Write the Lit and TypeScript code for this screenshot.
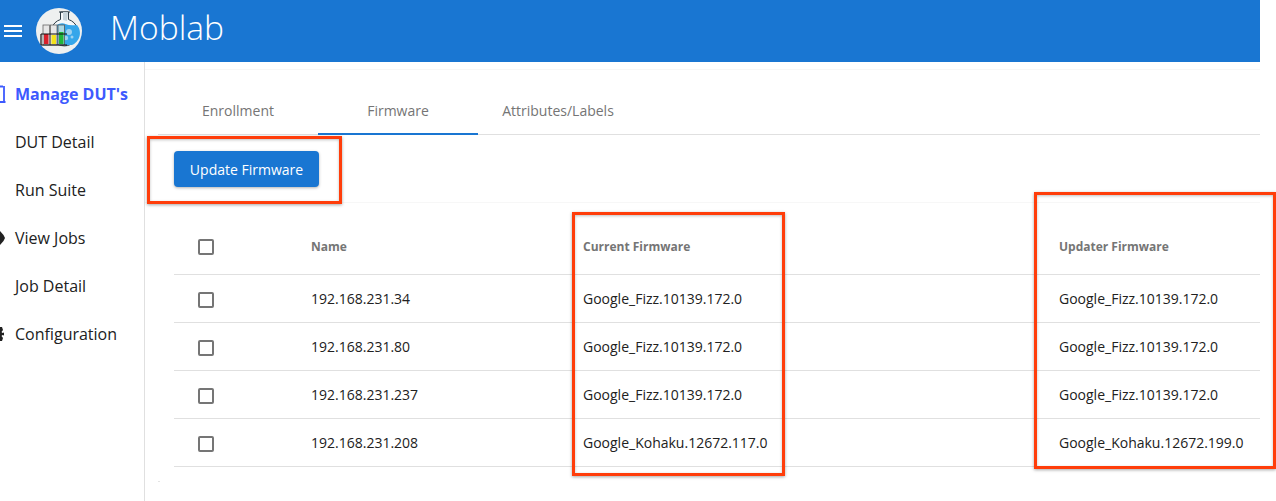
import { LitElement, html, css, svg } from "lit";
import { customElement } from "lit/decorators.js";

const rows = [
  ["192.168.231.34", "Google_Fizz.10139.172.0", "Google_Fizz.10139.172.0"],
  ["192.168.231.80", "Google_Fizz.10139.172.0", "Google_Fizz.10139.172.0"],
  ["192.168.231.237", "Google_Fizz.10139.172.0", "Google_Fizz.10139.172.0"],
  ["192.168.231.208", "Google_Kohaku.12672.117.0", "Google_Kohaku.12672.199.0"],
];

const logo = html`<svg class="logo" viewBox="0 0 46 46" width="46" height="46">
  <circle cx="23" cy="23" r="23" fill="#eef0f0"/>
  <path d="M23 4h11M24.5 4v7.5a13.5 13.5 0 1 0 8 0V4z" fill="#f4f8fa" stroke="#2a3a44" stroke-width="1"/>
  <path d="M27 4l5 0-1 9-4-1z" fill="#c5d3da"/>
  <path d="M20.5 17q5-3 9-1t11.500 1a12.800 12.800 0 0 1-5 20h-15z" fill="#35a6ea"/>
  <circle cx="33" cy="24" r="3" fill="#9ed2f0"/><circle cx="30" cy="30" r="2.200" fill="#9ed2f0"/><circle cx="36" cy="29" r="1.500" fill="#9ed2f0"/>
  <rect x="7" y="17" width="6.500" height="20" fill="#e6e6e6" stroke="#666" stroke-width="0.800"/>
  <rect x="14.500" y="17" width="6.500" height="20" fill="#e6e6e6" stroke="#666" stroke-width="0.800"/>
  <rect x="22" y="17" width="6.500" height="20" fill="#aad8e4" stroke="#555" stroke-width="0.800"/>
  <rect x="8" y="26" width="4.500" height="10" fill="#d8202a"/>
  <rect x="15.500" y="27" width="4.500" height="9" fill="#f3e21a"/>
  <rect x="23" y="24" width="4.500" height="12" fill="#21b63a"/>
  <path d="M5 26h26M5 37h26M5 26v11" fill="none" stroke="#111" stroke-width="1.200"/>
</svg>`;

const icons = {
  dut: svg`<path d="M0 4.500h3M4 4v16M0 20h5.500" fill="none" stroke="currentColor" stroke-width="1.800"/>`,
  jobs: svg`<path d="M0 5l3.500 4 1.500 3-1.500 3-3.500 4z" fill="currentColor"/>`,
  gear: svg`<path d="M0 5h2l1 3-1.500 2 1 1 1.500-.5v3l-1.500-.5-1 1 1.500 2-1 3H0z" fill="currentColor"/>`,
};

function clipped(name?: keyof typeof icons) {
  if (!name) return "";
  return html`<svg class="edge" width="6" height="24" viewBox="0 0 6 24">${icons[name]}</svg>`;
}

@customElement("app-root")
export class AppRoot extends LitElement {
  static styles = css`
    :host {
      display: block;
      position: relative;
      width: 1276px;
      height: 501px;
      overflow: hidden;
      background: #fff;
      font-family: "Open Sans", sans-serif;
      color: #212121;
    }
    .top {
      width: 1260px;
      height: 62px;
      background: #1976d2;
      color: #fff;
      display: flex;
      align-items: center;
      box-sizing: border-box;
      padding-left: 4px;
    }
    .burger { display: block; margin-right: 14px; }
    .logo { display: block; margin-right: 28px; }
    .title { font-size: 33.6px; font-weight: 300; line-height: 1; padding-bottom: 6px; }
    .main { display: flex; width: 1260px; height: 439px; }
    .side {
      width: 144px;
      border-right: 1px solid #e0e0e0;
      padding-top: 8px;
    }
    .nav {
      height: 48px;
      line-height: 48px;
      padding-left: 15px;
      font-size: 16px;
      color: #212121;
    }
    .nav.on { color: #3d5afe; font-weight: 700; }
    .edge { position: absolute; left: 0; margin-top: 12px; color: #212121; }
    .nav.on .edge { color: #3d5afe; }
    .content { flex: 1; min-width: 0; }
    .rule { height: 1px; background: #f7f7f7; }
    .pad { height: 7px; }
    .tabs {
      display: flex;
      margin: 17px 0 0 13px;
      height: 47px;
      border-bottom: 1px solid #e0e0e0;
    }
    .tab {
      width: 160px;
      text-align: center;
      font-size: 14px;
      line-height: 47px;
      color: #757575;
      box-sizing: border-box;
    }
    .tab.on { border-bottom: 2px solid #1976d2; height: 48px; }
    .actions { height: 68px; box-sizing: border-box; padding: 16px 0 0 29px; border-bottom: 1px solid #f7f7f7; }
    .btn {
      display: block;
      width: 145px;
      height: 36px;
      border: 0;
      border-radius: 4px;
      background: #1976d2;
      color: #fff;
      font: 14px "Open Sans", sans-serif;
      padding: 0;
      box-shadow: 0 1px 3px rgba(0, 0, 0, 0.3);
    }
    .table { margin-left: 29px; }
    .row {
      display: grid;
      grid-template-columns: 137px 272px 476px 1fr;
      height: 48px;
      align-items: center;
      border-bottom: 1px solid #e0e0e0;
      box-sizing: border-box;
      font-size: 14px;
      color: #212121;
    }
    .row.head {
      height: 72px;
      padding-top: 16px;
      font-size: 12px;
      font-weight: 700;
      color: #757575;
    }
    .box {
      display: block;
      width: 16px;
      height: 16px;
      margin: 2px 0 0 24px;
      border: 2px solid #757575;
      border-radius: 2px;
      box-sizing: border-box;
    }
    .head .box { margin-top: 0; }
    .mark {
      position: absolute;
      border: 3px solid #ff3d0a;
      box-sizing: border-box;
      box-shadow: 0 1px 3px rgba(0, 0, 0, 0.35), inset 0 1px 3px rgba(0, 0, 0, 0.25);
    }
    .m1 { left: 147px; top: 136px; width: 195px; height: 68px; }
    .m2 { left: 572px; top: 212px; width: 213px; height: 264px; }
    .m3 { left: 1034px; top: 192px; width: 242px; height: 277px; }
    .speck { position: absolute; left: 158px; top: 481px; width: 2px; height: 1px; background: #e4e4e4; }
  `;

  render() {
    const nav: [string, keyof typeof icons | undefined][] = [
      ["Manage DUT's", "dut"],
      ["DUT Detail", undefined],
      ["Run Suite", undefined],
      ["View Jobs", "jobs"],
      ["Job Detail", undefined],
      ["Configuration", "gear"],
    ];
    return html`
      <header class="top">
        <svg class="burger" width="18" height="12" viewBox="0 0 18 12">
          <path d="M0 1h18M0 6h18M0 11h18" stroke="#fff" stroke-width="2"/>
        </svg>
        ${logo}
        <span class="title">Moblab</span>
      </header>
      <div class="main">
        <nav class="side">
          ${nav.map(([t, i], n) => html`<div class="nav ${n === 0 ? "on" : ""}">${clipped(i)}${t}</div>`)}
        </nav>
        <section class="content">
          <div class="pad"></div>
          <div class="rule"></div>
          <div class="tabs">
            <div class="tab">Enrollment</div>
            <div class="tab on">Firmware</div>
            <div class="tab">Attributes/Labels</div>
          </div>
          <div class="actions"><button class="btn">Update Firmware</button></div>
          <div class="table">
            <div class="row head">
              <span class="box"></span><span>Name</span><span>Current Firmware</span><span>Updater Firmware</span>
            </div>
            ${rows.map(
              (r) => html`<div class="row">
                <span class="box"></span><span>${r[0]}</span><span>${r[1]}</span><span>${r[2]}</span>
              </div>`
            )}
          </div>
        </section>
      </div>
      <div class="mark m1"></div>
      <div class="mark m2"></div>
      <div class="mark m3"></div>
      <div class="speck"></div>
    `;
  }
}
